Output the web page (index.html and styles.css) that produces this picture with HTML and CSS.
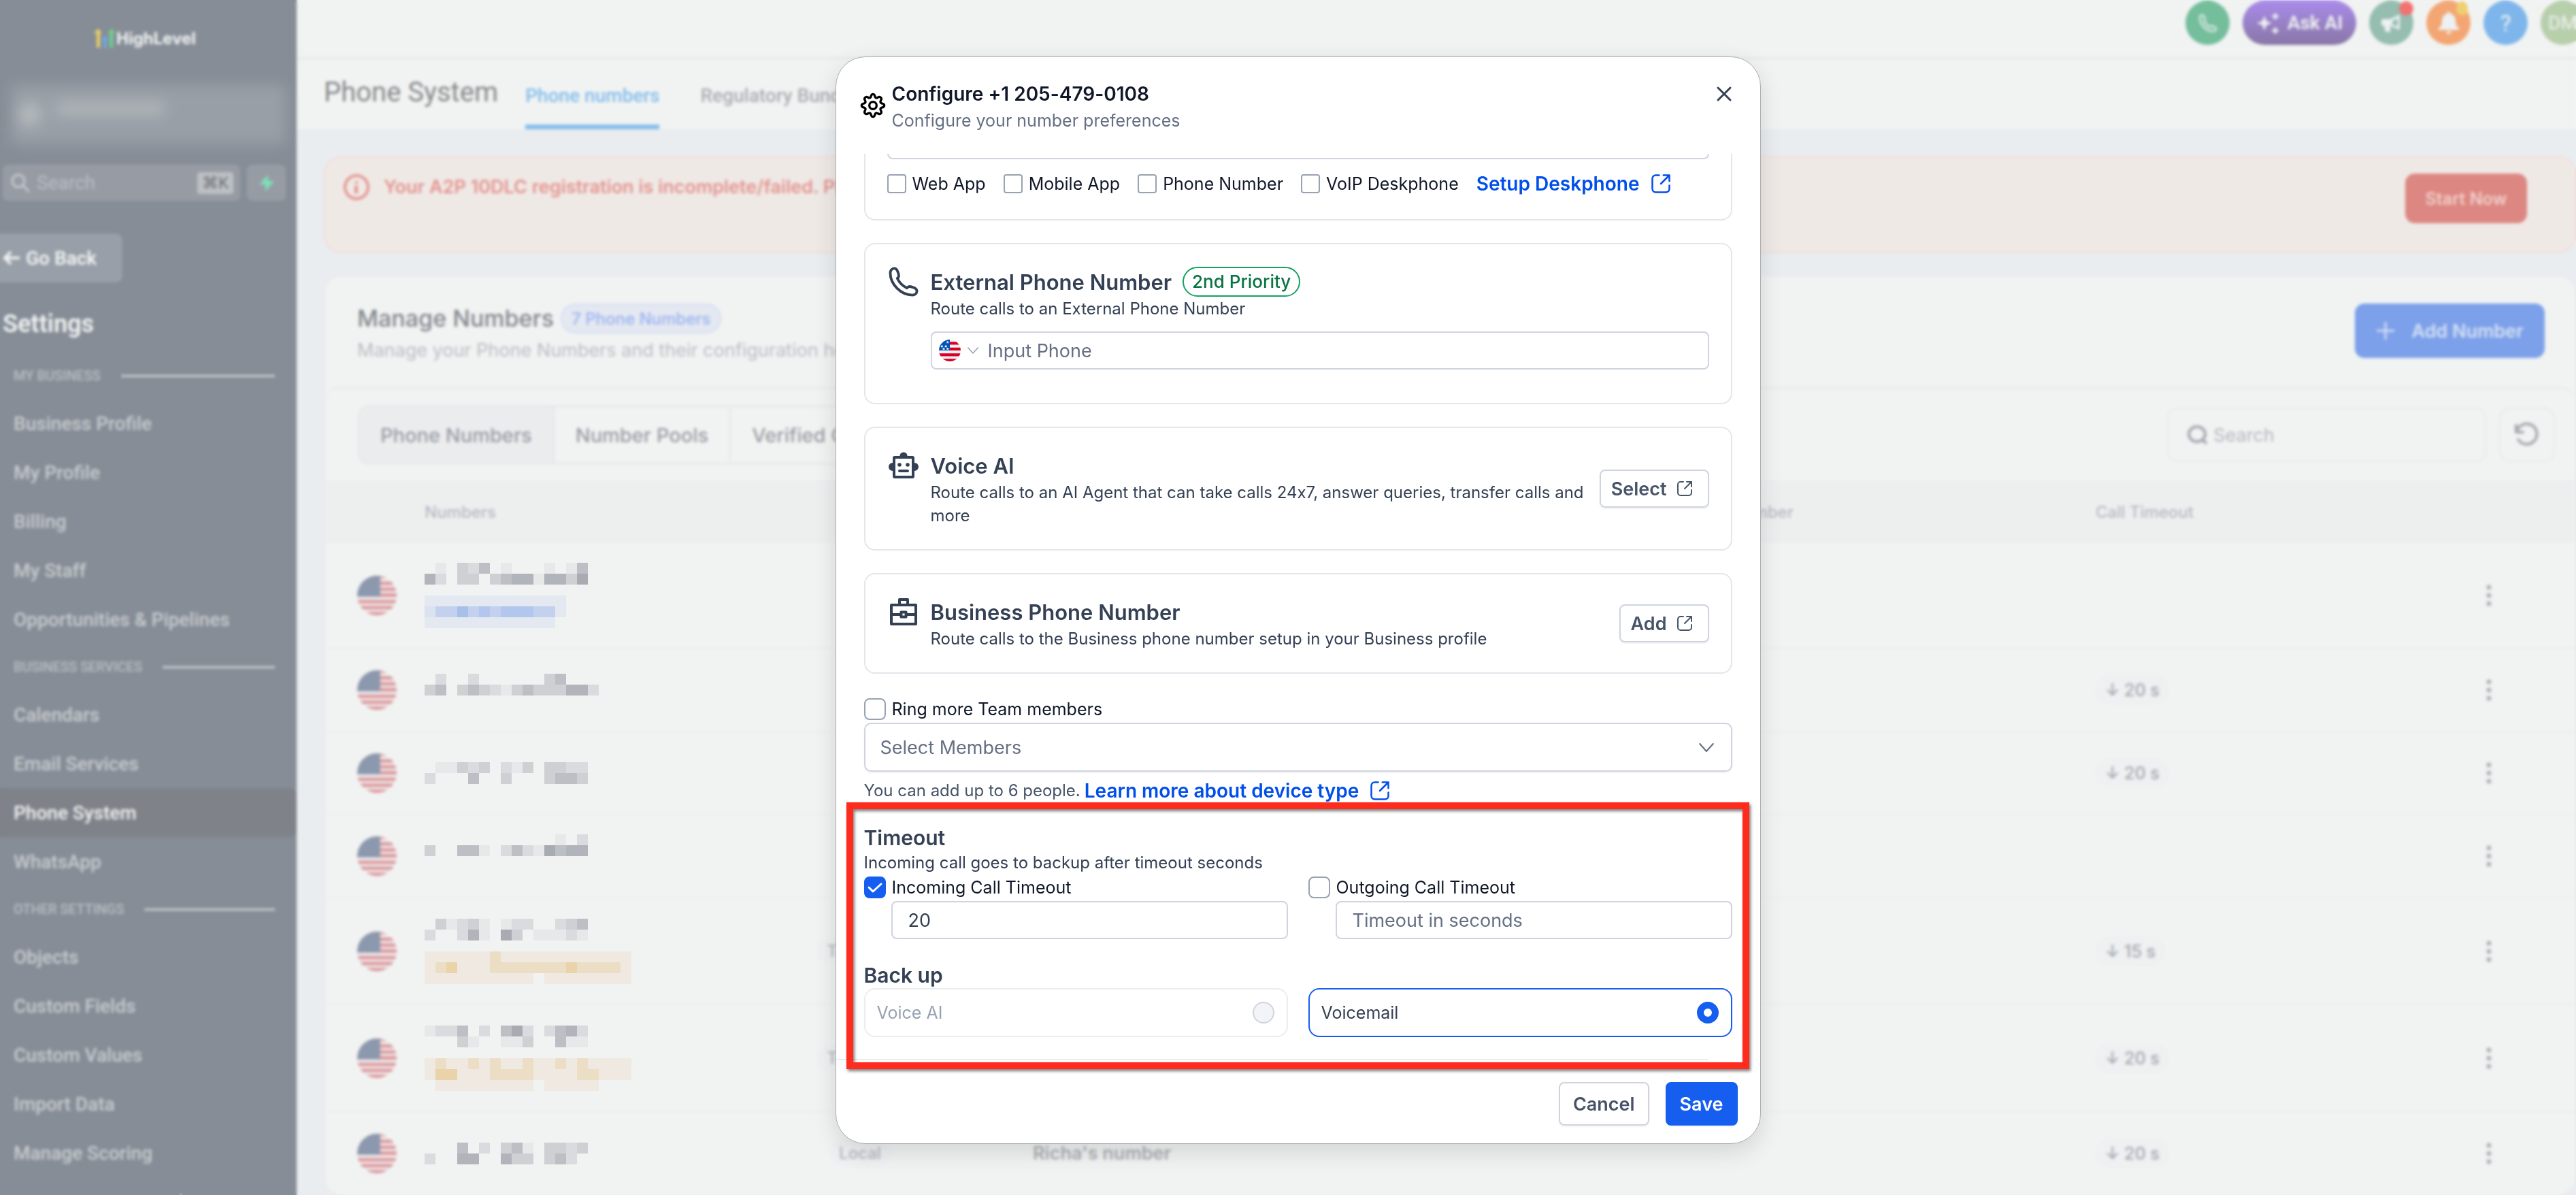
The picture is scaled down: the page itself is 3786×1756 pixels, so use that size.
FILE: index.html
```html
<!DOCTYPE html>
<html lang="en">
  <head>
    <meta charset="UTF-8" />
    <meta name="viewport" content="width=device-width, initial-scale=1.0" />
    <title>Phone System</title>
    <link rel="stylesheet" href="styles.css">
  </head>
  <body>
    <!-- shared icons -->
    <svg class="sprite" aria-hidden="true">
      <clipPath id="round"><circle cx="30" cy="30" r="30" /></clipPath>
      <symbol id="i-flag" viewBox="0 0 60 60">
        <g clip-path="url(#round)">
          <rect width="60" height="60" fill="#f0f0f0" />
          <path fill="#d80027" d="M30 6h30v8H30zM30 22h30v8H30zM0 38h60v8H0zM0 53h60v7H0z" />
          <rect width="30" height="30" fill="#0052b4" />
          <path fill="#fff" d="M8 14l1 3h3l-2 2 1 3-3-2-3 2 1-3-2-2h3zM19 14l1 3h3l-2 2 1 3-3-2-3 2 1-3-2-2h3zM24 3l1 3h3l-2 2 1 3-3-2-3 2 1-3-2-2h3zM24 22l1 2h3l-2 2 1 3-3-2-3 2 1-3-2-2h3zM13 22l1 2h3l-2 2 1 3-3-2-3 2 1-3-2-2h3z" />
        </g>
      </symbol>
      <symbol id="i-flag-soft" viewBox="0 0 60 60">
        <g clip-path="url(#round)">
          <rect width="60" height="60" fill="#eeeded" />
          <path fill="#dc9298" d="M0 0h60v4H0zM0 9h60v5H0zM0 18h60v5H0zM0 27h60v5H0zM0 37h60v5H0zM0 46h60v5H0zM0 55h60v5H0z" />
          <rect width="35" height="32" fill="#8c98ae" />
        </g>
      </symbol>
      <symbol id="i-out" viewBox="0 0 24 24">
        <path fill="none" stroke="currentColor" stroke-width="2" stroke-linecap="round" stroke-linejoin="round" d="M10 2H6a4 4 0 0 0-4 4v12a4 4 0 0 0 4 4h12a4 4 0 0 0 4-4v-4M15 2h7v7M22 2L12 12" />
      </symbol>
      <symbol id="i-phone" viewBox="0 0 24 24">
        <path fill="none" stroke="currentColor" stroke-width="2" stroke-linejoin="round" d="M7.2 9.4c.6-.5 1-.9 1.1-1.5.2-.9-.4-2.7-1-4.200C6.800 2.500 6 1.800 4.800 1.800 3 1.800 1.800 3.400 1.800 5.200 1.800 14 10 22.200 18.800 22.200c1.800 0 3.400-1.200 3.400-3 0-1.200-.7-2-1.900-2.500-1.500-.6-3.300-1.200-4.200-1-.6.1-1 .5-1.500 1.100-3.200-1.500-5.900-4.200-7.400-7.400z" />
      </symbol>
      <symbol id="i-chev" viewBox="0 0 20 12">
        <path fill="none" stroke="currentColor" stroke-width="2" stroke-linecap="round" stroke-linejoin="round" d="M1 1l9 10 9-10" />
      </symbol>
      <symbol id="i-search" viewBox="0 0 28 28">
        <circle cx="11" cy="11" r="9" fill="none" stroke="currentColor" stroke-width="3" />
        <path stroke="currentColor" stroke-width="3" stroke-linecap="round" d="M18 18l8 8" />
      </symbol>
      <symbol id="i-kebab" viewBox="0 0 8 32">
        <path fill="currentColor" d="M1 1h6v6H1zM1 13h6v6H1zM1 25h6v6H1z" />
      </symbol>
    </svg>

    <div class="app">
      <nav class="sidebar">
        <div class="logo">
          <svg width="32" height="28" viewBox="0 0 32 28">
            <path fill="#e8cf68" d="M6 0l6 7H9v21H4V7H0z" />
            <path fill="#6fa8e2" d="M16 10l6 7h-3v11h-5V17h-4z" />
            <path fill="#6fd08c" d="M26 0l6 7h-4v21h-5V7h-3z" />
          </svg>
          <span>HighLevel</span>
        </div>
        <div class="account">
          <i class="avatar"></i>
          <i class="name"></i>
        </div>
        <div class="side-search">
          <label class="side-field">
            <svg width="28" height="28"><use href="#i-search" /></svg>
            <input type="text" placeholder="Search" aria-label="Search menu" />
            <kbd>⌘K</kbd>
          </label>
          <button class="bolt" aria-label="Quick actions">
            <svg width="24" height="28" viewBox="0 0 24 28"><path fill="#7fdfb8" d="M14 2L1 16h9v10l13-15h-9z" /></svg>
          </button>
        </div>
        <button class="go-back">
          <svg width="26" height="22" viewBox="0 0 26 22"><path fill="none" stroke="currentColor" stroke-width="4" d="M25 11H3M12 2l-9 9 9 9" /></svg>
          Go Back
        </button>
        <h2 class="side-title">Settings</h2>
        <h3>MY BUSINESS</h3>
        <a href="#">Business Profile</a>
        <a href="#">My Profile</a>
        <a href="#">Billing</a>
        <a href="#">My Staff</a>
        <a href="#">Opportunities &amp; Pipelines</a>
        <h3>BUSINESS SERVICES</h3>
        <a href="#">Calendars</a>
        <a href="#">Email Services</a>
        <a href="#" class="active">Phone System</a>
        <a href="#">WhatsApp</a>
        <h3>OTHER SETTINGS</h3>
        <a href="#">Objects</a>
        <a href="#">Custom Fields</a>
        <a href="#">Custom Values</a>
        <a href="#">Import Data</a>
        <a href="#">Manage Scoring</a>
        <a href="#">Domains &amp; URL Redirects</a>
      </nav>

      <main class="main">
        <header class="topbar">
          <button class="round green" aria-label="Dialer"><svg width="28" height="28"><use href="#i-phone" /></svg></button>
          <button class="ask">
            <svg width="34" height="34" viewBox="0 0 34 34"><path fill="currentColor" d="M12 6l3 8 8 3-8 3-3 8-3-8-8-3 8-3zM28 1l2 4 4 2-4 2-2 4-2-4-4-2 4-2zM28 22l2 4 4 2-4 2-2 4-2-4-4-2 4-2z" /></svg>
            Ask AI
          </button>
          <button class="round teal" aria-label="Announcements">
            <svg width="30" height="28" viewBox="0 0 30 28"><path fill="currentColor" fill-rule="evenodd" d="M2 8h11L27 1v23l-14-6v9H6l-2-9H2q-2 0-2-2v-6q0-2 2-2zM16 11v5l8 3V7z" /></svg>
            <i class="dot red"></i>
          </button>
          <button class="round orange" aria-label="Notifications">
            <svg width="32" height="34" viewBox="0 0 32 34"><path fill="currentColor" d="M16 0q2 0 2 3 8 1 8 11 0 8 5 10v3H1v-3q5-2 5-10Q6 4 14 3q0-3 2-3zM12 29h8q-1 4-4 4t-4-4z" /></svg>
            <i class="dot yellow"></i>
          </button>
          <button class="round blue">?</button>
          <button class="round olive">DM</button>
        </header>
        <div class="titlebar">
          <h1>Phone System</h1>
          <a href="#" class="tab current">Phone numbers</a>
          <a href="#" class="tab">Regulatory Bundle</a>
        </div>
        <div class="content">
          <div class="alert">
            <svg class="info" width="40" height="40" viewBox="0 0 40 40"><circle cx="20" cy="20" r="17" fill="none" stroke="currentColor" stroke-width="4" /><path fill="currentColor" d="M18 11h4v4h-4zM17 18h5v11h-5z" /></svg>
            <p>Your A2P 10DLC registration is incomplete/failed. Please</p>
            <button>Start Now</button>
          </div>
          <section class="card">
            <div class="card-head">
              <div>
                <div class="head-line">
                  <h2>Manage Numbers</h2>
                  <span class="count">7 Phone Numbers</span>
                </div>
                <p>Manage your Phone Numbers and their configuration here</p>
              </div>
              <button class="add-number">
                <svg width="28" height="28" viewBox="0 0 28 28"><path stroke="currentColor" stroke-width="3" d="M14 1v26M1 14h26" /></svg>
                Add Number
              </button>
            </div>
            <div class="tools">
              <div class="segments">
                <button class="on">Phone Numbers</button>
                <button>Number Pools</button>
                <button>Verified Caller IDs</button>
              </div>
              <div class="finder">
                <label class="find-field">
                  <svg width="30" height="28" viewBox="0 0 30 28"><ellipse cx="14" cy="13" rx="12" ry="11" fill="none" stroke="currentColor" stroke-width="4" /><path stroke="currentColor" stroke-width="4" d="M22 21l6 6" /></svg>
                  <input type="text" placeholder="Search" aria-label="Search numbers" />
                </label>
                <button class="reload" aria-label="Refresh">
                  <svg width="36" height="36" viewBox="0 0 36 36"><path fill="none" stroke="currentColor" stroke-width="4" stroke-linecap="round" stroke-linejoin="round" d="M2 4v10h10M3 13A15 15 0 1 1 5 25" /></svg>
                </button>
              </div>
            </div>
            <table>
              <colgroup>
                <col class="c-flag" /><col class="c-num" /><col class="c-type" /><col class="c-name" /><col class="c-fwd" /><col /><col class="c-time" /><col class="c-act" />
              </colgroup>
              <thead>
                <tr>
                  <th></th><th>Numbers</th><th></th><th></th><th class="right">Forwarding Number</th><th></th><th>Call Timeout</th><th></th>
                </tr>
              </thead>
              <tbody id="rows"></tbody>
            </table>
          </section>
        </div>
      </main>
    </div>

    <div class="overlay">
      <div class="modal" role="dialog" aria-labelledby="modal-title">
        <header class="modal-head">
          <svg class="gear" width="40" height="40" viewBox="0 0 24 24"><circle cx="12" cy="12" r="3.200" fill="none" stroke="#000" stroke-width="2" /><path fill="none" stroke="#000" stroke-width="2" stroke-linejoin="round" d="M10.200 4.200C10.500 2.600 11 2 12 2s1.500.6 1.800 2.200c.3 1.100 1.200 1.400 2.200.9 1.400-.9 2.200-.9 2.900-.1.800.7.800 1.500-.1 2.900-.5 1-.2 1.900.9 2.200 1.600.3 2.300.9 2.300 1.900s-.7 1.600-2.300 1.900c-1.100.3-1.400 1.200-.9 2.200.9 1.400.9 2.200.1 2.900-.7.800-1.500.8-2.900-.1-1-.5-1.900-.2-2.200.9-.3 1.600-.8 2.200-1.800 2.200s-1.500-.6-1.800-2.200c-.3-1.100-1.200-1.400-2.200-.9-1.400.9-2.200.9-2.900.1-.8-.7-.8-1.500.1-2.900.5-1 .2-1.900-.9-2.200C2.700 13.600 2 13 2 12s.7-1.600 2.300-1.900c1.100-.3 1.400-1.200.9-2.200-.9-1.400-.9-2.200-.1-2.900.7-.8 1.500-.8 2.900.1 1 .5 1.900.2 2.200-.9z" /></svg>
          <div>
            <h2 id="modal-title">Configure +1 205-479-0108</h2>
            <p>Configure your number preferences</p>
          </div>
          <button class="close" aria-label="Close"><svg width="24" height="24" viewBox="0 0 24 24"><path stroke="currentColor" stroke-width="3" stroke-linecap="round" d="M3 3l18 18M21 3L3 21" /></svg></button>
        </header>

        <div class="modal-body">
          <section class="box devices">
            <div class="field-end"></div>
            <div class="checks">
              <label><input type="checkbox" class="small" />Web App</label>
              <label><input type="checkbox" class="small" />Mobile App</label>
              <label><input type="checkbox" class="small" />Phone Number</label>
              <label><input type="checkbox" class="small" />VoIP Deskphone</label>
              <a href="#" class="link">Setup Deskphone<svg width="30" height="30"><use href="#i-out" /></svg></a>
            </div>
          </section>

          <section class="box external">
            <div class="icon"><svg width="46" height="46"><use href="#i-phone" /></svg></div>
            <div class="text">
              <div class="line"><h3>External Phone Number</h3><span class="priority">2nd Priority</span></div>
              <p>Route calls to an External Phone Number</p>
              <label class="phone-field">
                <svg width="32" height="32"><use href="#i-flag" /></svg>
                <svg class="chev" width="16" height="10"><use href="#i-chev" /></svg>
                <input type="tel" placeholder="Input Phone" aria-label="External phone number" />
              </label>
            </div>
          </section>

          <section class="box">
            <div class="icon">
              <svg width="48" height="48" viewBox="0 0 24 24" fill="currentColor"><path fill-rule="evenodd" d="M9.200 5a2.800 2.800 0 0 1 5.600 0H18.500A1.500 1.500 0 0 1 20 6.500V10a3 3 0 0 1 0 6v4a1.500 1.500 0 0 1-1.500 1.500h-13A1.500 1.500 0 0 1 4 20v-4a3 3 0 0 1 0-6V6.500A1.500 1.500 0 0 1 5.500 5zM6 7v12.500h12V7z" /><circle cx="9" cy="11.500" r="1.400" /><circle cx="15" cy="11.500" r="1.400" /><rect x="8" y="15" width="8" height="2" rx="1" /></svg>
            </div>
            <div class="text">
              <div class="line"><h3>Voice AI</h3></div>
              <p>Route calls to an AI Agent that can take calls 24x7, answer queries, transfer calls and more</p>
            </div>
            <button class="btn mini">Select<svg width="24" height="24"><use href="#i-out" /></svg></button>
          </section>

          <section class="box">
            <div class="icon">
              <svg width="48" height="48" viewBox="0 0 24 24" fill="none" stroke="currentColor" stroke-width="2" stroke-linejoin="round"><rect x="3" y="7" width="18" height="14" /><path d="M9 7V3h6v4M3 14h7M14 14h7" /><rect x="10.200" y="12.200" width="3.600" height="3.600" /></svg>
            </div>
            <div class="text">
              <div class="line"><h3>Business Phone Number</h3></div>
              <p>Route calls to the Business phone number setup in your Business profile</p>
            </div>
            <button class="btn mini">Add<svg width="24" height="24"><use href="#i-out" /></svg></button>
          </section>

          <div class="team">
            <label class="check"><input type="checkbox" />Ring more Team members</label>
            <div class="select">
              <select aria-label="Select Members"><option>Select Members</option></select>
              <svg width="22" height="13"><use href="#i-chev" /></svg>
            </div>
            <p>You can add up to 6 people. <a href="#" class="link">Learn more about device type<svg width="30" height="30"><use href="#i-out" /></svg></a></p>
          </div>

          <h4>Timeout</h4>
          <p class="hint">Incoming call goes to backup after timeout seconds</p>
          <div class="two">
            <div>
              <label class="check"><input type="checkbox" checked />Incoming Call Timeout</label>
              <input type="text" class="seconds" value="20" aria-label="Incoming timeout in seconds" />
            </div>
            <div>
              <label class="check"><input type="checkbox" />Outgoing Call Timeout</label>
              <input type="text" class="seconds" placeholder="Timeout in seconds" aria-label="Outgoing timeout in seconds" />
            </div>
          </div>
          <h4>Back up</h4>
          <div class="two">
            <label class="option off">Voice AI<input type="radio" name="backup" disabled /></label>
            <label class="option picked">Voicemail<input type="radio" name="backup" checked /></label>
          </div>
        </div>

        <hr />
        <footer class="modal-foot">
          <button class="btn">Cancel</button>
          <button class="btn primary">Save</button>
        </footer>
        <div class="highlight"></div>
      </div>
    </div>
    <script src="script.js"></script>
  </body>
</html>
```

FILE: styles.css
```css
* {
  margin: 0;
  padding: 0;
  box-sizing: border-box;
}
body {
  height: 100vh;
  overflow: hidden;
  font-family: "Inter", sans-serif;
  font-size: 27px;
  font-feature-settings: "calt" 0;
  background-color: #f1f3f2;
}
button,
input,
select,
kbd {
  font: inherit;
  color: inherit;
}
button {
  border: none;
  background: none;
}
input {
  border: none;
  outline: none;
  background: none;
  min-width: 0;
}
a {
  color: inherit;
  text-decoration: none;
}
svg {
  flex-shrink: 0;
}
.sprite {
  position: absolute;
  width: 0;
  height: 0;
}

.app {
  display: flex;
  height: 100vh;
  overflow: hidden;
}

/* sidebar */
.sidebar {
  width: 436px;
  flex-shrink: 0;
  overflow: hidden;
  background-color: #868d97;
  color: #c8cbce;
  font-family: "Roboto", sans-serif;
  font-size: 28px;
}
.logo {
  display: flex;
  align-items: center;
  gap: 1px;
  height: 112px;
  padding-left: 138px;
  font-family: "Inter", sans-serif;
  font-size: 24px;
  font-weight: 700;
  color: #f0f2f2;
}
.account {
  display: flex;
  align-items: center;
  gap: 20px;
  height: 88px;
  margin: 12px 16px 0 16px;
  padding: 0 10px;
  background-color: #989fa6;
  filter: blur(10px);
}
.account .avatar {
  width: 36px;
  height: 36px;
  border-radius: 50%;
  background-color: #b4b9bb;
}
.account .name {
  width: 160px;
  height: 20px;
  margin-bottom: 16px;
  background-color: #b0b5b8;
}
.side-search {
  display: flex;
  gap: 10px;
  padding: 30px 16px 0 4px;
}
.side-field {
  flex: 1;
  min-width: 0;
  display: flex;
  align-items: center;
  gap: 10px;
  height: 53px;
  padding: 0 10px 0 12px;
  border-radius: 8px;
  background-color: #979ca4;
}
.side-field input {
  flex: 1;
  width: 0;
}
.side-field input::placeholder {
  color: #b9bdc1;
}
.side-field kbd {
  height: 32px;
  padding: 0 7px;
  border-radius: 4px;
  font-size: 24px;
  line-height: 32px;
  background-color: #bcc0c4;
  color: #6c7177;
}
.bolt {
  display: flex;
  align-items: center;
  justify-content: center;
  width: 57px;
  border-radius: 8px;
  background-color: #979ca4;
}
.go-back {
  display: flex;
  align-items: center;
  gap: 8px;
  width: 180px;
  height: 72px;
  margin-top: 48px;
  padding-left: 4px;
  border-radius: 0 10px 10px 0;
  font-weight: 600;
  background-color: #989fa8;
  color: #f0f2f2;
}
.side-title {
  padding: 39px 0 0 4px;
  font-size: 36px;
  font-weight: 600;
  line-height: 44px;
  color: #f0f2f2;
}
.sidebar h3 {
  display: flex;
  align-items: center;
  gap: 30px;
  height: 68px;
  padding: 0 32px 0 20px;
  font-size: 20px;
  font-weight: 500;
  color: #b9bdc2;
}
.side-title + h3 {
  margin-top: 20px;
}
.sidebar h3::after {
  content: "";
  flex: 1;
  height: 3px;
  background-color: #cccfd1;
}
.sidebar a {
  display: block;
  height: 72px;
  padding-left: 20px;
  font-weight: 500;
  line-height: 73px;
}
.sidebar a.active {
  border-radius: 0 10px 10px 0;
  background-color: #7f8289;
  color: #f0f2f2;
}

/* top bars */
.main {
  flex: 1;
  min-width: 0;
  background-color: #e9edf0;
}
.topbar {
  display: flex;
  justify-content: flex-end;
  gap: 19px;
  height: 87px;
  padding-top: 1px;
  margin-right: -13px;
  border-bottom: 3px solid #e6e9e8;
  font-family: "Roboto", sans-serif;
  font-size: 28px;
  background-color: #f1f3f2;
  color: #eef1f1;
}
.round {
  position: relative;
  display: flex;
  align-items: center;
  justify-content: center;
  width: 65px;
  height: 65px;
  border-radius: 50%;
}
.round.green { background-color: #74be9c; }
.round.teal { background-color: #95bdb0; }
.round.orange { background-color: #f3a673; }
.round.blue { background-color: #7eb6ec; font-size: 34px; }
.round.olive { background-color: #b7cfab; }
.ask {
  display: flex;
  align-items: center;
  justify-content: center;
  gap: 12px;
  width: 167px;
  height: 65px;
  border-radius: 33px;
  font-weight: 600;
  background: linear-gradient(#a98bea, #8977a6);
}
.dot {
  position: absolute;
  top: 1px;
  right: 0;
  width: 21px;
  height: 21px;
  border-radius: 50%;
}
.dot.red { background-color: #f27272; }
.dot.yellow { right: 4px; width: 17px; background-color: #f0cf70; }
.titlebar {
  display: flex;
  align-items: stretch;
  height: 103px;
  padding-left: 40px;
  font-family: "Roboto", sans-serif;
  font-size: 28px;
  background-color: #f1f3f2;
}
.titlebar h1 {
  margin-right: 40px;
  font-size: 40px;
  font-weight: 400;
  line-height: 97px;
  color: #84888a;
}
.tab {
  margin-right: 60px;
  padding-top: 6px;
  font-weight: 500;
  line-height: 96px;
  color: #aaaeb2;
}
.tab.current {
  border-bottom: 7px solid #84bdec;
  color: #84bdec;
}

/* page */
.content {
  padding: 39px 0 0 40px;
}
.alert {
  display: flex;
  align-items: flex-start;
  height: 143px;
  margin-bottom: 32px;
  padding: 24px 70px 0 26px;
  border: 2px solid #f2dcd9;
  border-radius: 26px;
  background-color: #efe9e6;
  color: #e49590;
}
.alert p {
  flex: 1;
  padding-left: 20px;
  font-weight: 600;
  line-height: 40px;
}
.alert button {
  width: 179px;
  height: 73px;
  border-radius: 14px;
  font-size: 25px;
  font-weight: 600;
  background-color: #dd8782;
  color: #f0d0cc;
}
.card {
  border: 2px solid #e8eaee;
  border-radius: 26px;
  background-color: #f1f3f2;
}
.card-head {
  display: flex;
  justify-content: space-between;
  align-items: flex-start;
  height: 163px;
  padding: 40px 44px 0 47px;
}
.head-line {
  display: flex;
  align-items: center;
  gap: 10px;
  height: 44px;
}
.head-line h2 {
  font-size: 34px;
  font-weight: 500;
  line-height: 44px;
  color: #82868d;
}
.count {
  height: 44px;
  padding: 0 14px;
  border: 2px solid #d3dcf2;
  border-radius: 22px;
  font-size: 24px;
  font-weight: 500;
  line-height: 42px;
  background-color: #e4e8f1;
  color: #9ab3f2;
}
.card-head p {
  line-height: 50px;
  color: #babdc6;
}
.add-number {
  display: flex;
  align-items: center;
  justify-content: center;
  gap: 24px;
  width: 279px;
  height: 80px;
  border-radius: 14px;
  font-weight: 600;
  background-color: #7ca0ea;
  color: #d5e0f4;
}
.tools {
  display: flex;
  justify-content: space-between;
  align-items: center;
  height: 138px;
  padding: 0 29px 0 48px;
  border-top: 2px solid #e4e6e9;
  border-radius: 20px 20px 0 0;
}
.segments {
  display: flex;
  border: 2px solid #e2e4e8;
  border-radius: 16px;
  overflow: hidden;
}
.segments button {
  height: 82px;
  padding: 0 31px;
  font-size: 29px;
  font-weight: 500;
  color: #999da4;
}
.segments button + button {
  border-left: 2px solid #e2e4e8;
}
.segments .on {
  background-color: #ebecee;
}
.finder {
  display: flex;
  gap: 19px;
  color: #b9bcc3;
}
.find-field {
  display: flex;
  align-items: center;
  gap: 8px;
  width: 469px;
  height: 80px;
  padding: 0 28px;
  border: 2px solid #e5e7eb;
  border-radius: 16px;
}
.find-field svg,
.reload {
  color: #a3a7ae;
}
.find-field input::placeholder {
  color: #b4b8c0;
}
.reload {
  display: flex;
  align-items: center;
  justify-content: center;
  width: 82px;
  border: 2px solid #e5e7eb;
  border-radius: 16px;
}
table {
  width: 100%;
  table-layout: fixed;
  border-collapse: collapse;
}
.c-flag { width: 146px; }
.c-num { width: 480px; }
.c-type { width: 320px; }
.c-name { width: 400px; }
.c-fwd { width: 812px; }
.c-time { width: 450px; }
.c-act { width: 254px; }
thead tr {
  height: 88px;
  border-top: 2px solid #e9ebee;
  background-color: #edefef;
}
th {
  text-align: left;
  font-size: 24px;
  font-weight: 500;
  color: #b6bac2;
}
th.right {
  text-align: right;
}
tbody tr {
  height: 122px;
  border-top: 2px solid #eaecee;
}
tbody tr.tall {
  height: 157px;
}
td svg {
  display: block;
}
td .flag {
  margin-left: 47px;
}
td .mosaic {
  position: relative;
  z-index: 2;
}
td.type {
  text-align: center;
  font-size: 24px;
  font-weight: 500;
  color: #b4b7be;
}
td.type span {
  display: inline-block;
  padding: 6px 14px;
  border-radius: 22px;
  background-color: #eff0f2;
}
td.name {
  padding-left: 94px;
  font-weight: 600;
  color: #aaadb2;
}
td.time span {
  display: inline-block;
  padding: 6px 14px;
  border-radius: 22px;
  font-size: 25px;
  font-weight: 500;
  background-color: #eef0f1;
  color: #a3a6ae;
}
td .kebab {
  margin-left: 124px;
  color: #a6a9b0;
}

/* modal */
.overlay {
  position: fixed;
  inset: 0;
  z-index: 1;
  display: flex;
  align-items: center;
  justify-content: center;
  padding: 8px 0 0 29px;
  backdrop-filter: blur(2px);
}
.modal {
  position: relative;
  z-index: 3;
  width: 1360px;
  border: 1px solid #a9abac;
  border-radius: 44px;
  background-color: #fff;
  color: #344054;
  box-shadow: 0 12px 32px rgba(60, 65, 70, 0.16);
}
.modal-head {
  display: flex;
  align-items: flex-start;
  gap: 8px;
  height: 142px;
  padding: 34px 41px 0 34px;
}
.modal-head .gear {
  margin-top: 17px;
}
.modal-head div {
  flex: 1;
}
.modal-head h2 {
  font-size: 28px;
  font-weight: 600;
  line-height: 40px;
  color: #101828;
}
.modal-head p {
  font-size: 25px;
  line-height: 38px;
  color: #667085;
}
.close {
  height: 24px;
  margin-top: 8px;
  line-height: 0;
}
.modal-body {
  padding: 0 41px 32px;
}
.box {
  display: flex;
  align-items: center;
  gap: 16px;
  margin-bottom: 33px;
  padding: 32px;
  border: 2px solid #e4e6eb;
  border-radius: 16px;
}
.box .icon {
  align-self: flex-start;
  display: flex;
  align-items: center;
  justify-content: center;
  width: 48px;
  height: 46px;
}
.box .text {
  flex: 1;
}
.box .line {
  display: flex;
  align-items: center;
  gap: 16px;
  height: 46px;
}
.box h3 {
  font-size: 31px;
  font-weight: 600;
}
.box p {
  font-size: 24px;
  line-height: 34px;
}
.devices {
  display: block;
  padding-top: 0;
  border-top: none;
  border-radius: 0 0 16px 16px;
}
.field-end {
  height: 8px;
  border: 2px solid #cfd4de;
  border-top: none;
  border-radius: 0 0 8px 8px;
}
.checks {
  display: flex;
  align-items: center;
  gap: 26px;
  height: 30px;
  margin: 21px 0 5px;
  font-size: 25px;
  color: #101828;
}
.checks label {
  display: flex;
  align-items: center;
  gap: 9px;
}
.link {
  display: inline-flex;
  align-items: center;
  gap: 16px;
  font-size: 28px;
  font-weight: 600;
  color: #004eeb;
}
.external {
  padding-bottom: 49px;
}
.priority {
  height: 44px;
  padding: 0 12px;
  border: 2px solid #16a063;
  border-radius: 22px;
  font-size: 26px;
  font-weight: 500;
  line-height: 40px;
  color: #087443;
}
.phone-field {
  display: flex;
  align-items: center;
  gap: 10px;
  height: 56px;
  margin-top: 16px;
  padding: 0 10px;
  border: 2px solid #cfd4de;
  border-radius: 8px;
}
.phone-field .chev {
  margin-right: 4px;
  color: #98a2b3;
}
.phone-field input {
  flex: 1;
}
.modal ::placeholder {
  color: #667085;
}
.btn {
  display: flex;
  align-items: center;
  height: 64px;
  padding: 0 19px;
  border: 2px solid #cfd4de;
  border-radius: 8px;
  font-weight: 600;
  color: #475467;
  box-shadow: 0 2px 3px rgba(16, 24, 40, 0.05);
}
.btn.mini {
  gap: 14px;
  height: 56px;
  padding: 0 22px 0 15px;
}
.btn.primary {
  border-color: #155eef;
  background-color: #155eef;
  color: #fff;
}

input[type="checkbox"] {
  appearance: none;
  width: 32px;
  height: 32px;
  border: 2px solid #98a2b3;
  border-radius: 8px;
}
input[type="checkbox"].small {
  width: 28px;
  height: 28px;
  border-radius: 4px;
}
input[type="checkbox"]:checked {
  border-color: #155eef;
  background: #155eef url("data:image/svg+xml,%3Csvg xmlns='http://www.w3.org/2000/svg' viewBox='0 0 28 28'%3E%3Cpath fill='none' stroke='%23fff' stroke-width='3' stroke-linecap='round' stroke-linejoin='round' d='M5 14l6 6L23 9'/%3E%3C/svg%3E") center no-repeat;
}
input[type="radio"] {
  appearance: none;
  width: 32px;
  height: 32px;
  border: 2px solid #d0d5dd;
  border-radius: 50%;
  background-color: #f2f4f7;
}
input[type="radio"]:checked {
  border: 10px solid #155eef;
  background-color: #fff;
}
.check {
  display: flex;
  align-items: center;
  gap: 9px;
  height: 32px;
  margin-bottom: 4px;
  font-size: 25px;
  color: #101828;
}
.team {
  margin-top: 36px;
}
.select {
  position: relative;
}
.select select {
  appearance: none;
  display: block;
  width: 100%;
  height: 72px;
  padding: 0 22px;
  border: 2px solid #cfd4de;
  border-radius: 10px;
  background-color: #fff;
  color: #667085;
  box-shadow: 0 2px 3px rgba(16, 24, 40, 0.05);
}
.select svg {
  position: absolute;
  top: 30px;
  right: 27px;
  color: #667085;
}
.team p {
  display: flex;
  align-items: center;
  gap: 6px;
  margin-top: 9px;
  font-size: 24px;
  line-height: 38px;
  color: #475467;
}
.modal h4 {
  margin-top: 31px;
  font-size: 30px;
  font-weight: 600;
  line-height: 38px;
}
.hint {
  font-size: 24px;
  line-height: 36px;
  margin-bottom: 2px;
}
.two {
  display: grid;
  grid-template-columns: 1fr 1fr;
  gap: 30px;
}
.seconds {
  display: block;
  width: calc(100% - 40px);
  height: 56px;
  margin-left: 40px;
  padding: 0 23px;
  border: 2px solid #cfd4de;
  border-radius: 8px;
}
.two + h4 {
  margin-top: 34px;
}
.option {
  display: flex;
  align-items: center;
  justify-content: space-between;
  height: 72px;
  padding: 0 18px 0 17px;
  border: 2px solid #eaecf0;
  border-radius: 16px;
  font-size: 25px;
}
.option.off {
  color: #98a2b3;
}
.option.picked {
  border-color: #155eef;
}
.modal hr {
  margin-right: 77px;
  border: none;
  border-top: 2px solid #eaecf0;
}
.modal-foot {
  display: flex;
  justify-content: flex-end;
  gap: 24px;
  padding: 32px 33px 26px;
}
/* frame round the timeout and backup settings */
.highlight {
  position: absolute;
  left: 15px;
  right: 16px;
  bottom: 109px;
  height: 392px;
  border: 10px solid #ff2b1c;
  filter: drop-shadow(2px 3px 2px rgba(0, 0, 0, 0.5));
}
```

FILE: script.js
```js
// hidden numbers are drawn as 16px blocks, one letter per shade
const shades = {
  a: "#e6e8e9", b: "#dadbde", c: "#ced0d3", d: "#bcbfc4", e: "#b1b4ba", f: "#a8abb1",
  g: "#e4e8f0", h: "#dbe2f0", i: "#c4d1ee", j: "#b3c6ee", k: "#a8bfea",
  o: "#efe9e1", p: "#ecdec5", q: "#ead3a8",
};

const rows = [
  { tall: true, mask: [".a.cbd.a...a.ad", "eb.cc.cdeeaeecf", "", "ggggggggggggg", "hiikijijjjiig", "gggggggggggg"] },
  { time: "20 s", mask: [".b..b......cd..", "cd.cdcbacdccceeb", ""] },
  { time: "20 s", mask: [".aacbc.bac.ccbb", "b...d..c...cddc"] },
  { mask: ["............a.b", "c..dda.bdbafdee", "", ""] },
  { tall: true, type: "Toll Free", time: "15 s", mask: [".cabca.abb..bcd", "b..bea.fc.aaaba", "", "oooooopoooooooooooo", "opqooopppppppqppppo", "oooooooooo.oooooooo"] },
  { tall: true, type: "Toll Free", time: "20 s", mask: ["abbd.b.dfb.bdeb", "...ca..aac..daa", "", "opoopopoopoopopoooo", "oqqoooppppooooppooo", ".ooooooooo.ooooo"] },
  { type: "Local", name: "Richa's number", time: "20 s", mask: ["...d.b.cda.ccbc", "b..ee..ecc.cdb"] },
];

function mosaic(lines) {
  let rects = "";
  lines.forEach((line, y) => {
    [...line].forEach((ch, x) => {
      if (shades[ch]) {
        rects += `<rect x="${x * 16}" y="${y * 16}" width="16" height="16" fill="${shades[ch]}"/>`;
      }
    });
  });
  return `<svg class="mosaic" width="320" height="${lines.length * 16}" shape-rendering="crispEdges">${rects}</svg>`;
}

document.getElementById("rows").innerHTML = rows
  .map(
    (r) => `<tr class="${r.tall ? "tall" : ""}">
      <td><svg class="flag" width="58" height="58"><use href="#i-flag-soft"/></svg></td>
      <td>${mosaic(r.mask)}</td>
      <td class="type">${r.type ? `<span>${r.type}</span>` : ""}</td>
      <td class="name">${r.name || ""}</td>
      <td></td>
      <td></td>
      <td class="time">${r.time ? `<span>↓ ${r.time}</span>` : ""}</td>
      <td><svg class="kebab" width="8" height="32"><use href="#i-kebab"/></svg></td>
    </tr>`
  )
  .join("");
```
